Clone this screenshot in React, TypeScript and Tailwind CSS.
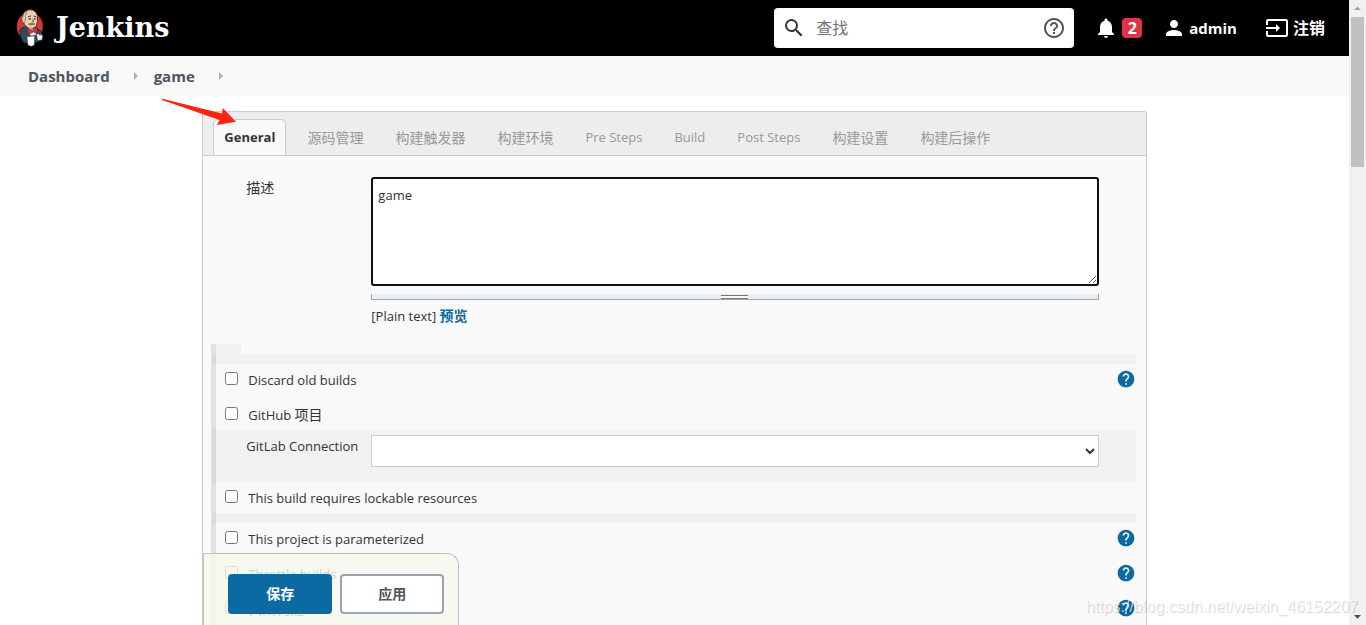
import clsx from 'clsx';
import { ReactNode } from 'react';
import {
  MdArrowDropDown,
  MdArrowDropUp,
  MdHelp,
  MdHelpOutline,
  MdInput,
  MdNotifications,
  MdPerson,
  MdSearch,
} from 'react-icons/md';

const tabs = [
  { title: 'General', latin: true },
  { title: '源码管理' },
  { title: '构建触发器' },
  { title: '构建环境' },
  { title: 'Pre Steps', latin: true },
  { title: 'Build', latin: true },
  { title: 'Post Steps', latin: true },
  { title: '构建设置' },
  { title: '构建后操作' },
];

interface OptionRowProps {
  id: string;
  label: ReactNode;
  help?: boolean;
  className?: string;
}

function OptionRow({ id, label, help, className }: OptionRowProps) {
  return (
    <div className={clsx('flex items-start pl-[9px]', className)}>
      <input
        id={id}
        type="checkbox"
        className="mt-2 size-[13px] shrink-0"
      />
      <label htmlFor={id} className="ml-2.5 mt-1.5 text-[13px] leading-5">
        {label}
      </label>
      {help && (
        <button
          type="button"
          aria-label="Help"
          className="ml-auto mt-[5px] text-[#0b6aa2]"
        >
          <MdHelp size={20} />
        </button>
      )}
    </div>
  );
}

function Divider() {
  return <div className="-ml-[3px] h-2.5 bg-black/[0.03]" />;
}

function Crumb({ children }: { children: ReactNode }) {
  return (
    <li className="flex items-center">
      <a href="#" className="leading-6">
        {children}
      </a>
      <svg viewBox="0 0 4 8" className="ml-6 mr-4 h-2 w-1 fill-[#b0b0b0]">
        <path d="M0 0l4 4-4 4z" />
      </svg>
    </li>
  );
}

function Logo() {
  return (
    <svg viewBox="0 0 28 40" className="h-10 w-7" aria-hidden="true">
      <ellipse cx="13.8" cy="18.500" rx="13" ry="14" fill="#d33833" />
      <path
        d="M5 20.500L9 19l11 1 4.500 2.500 2.300 5-1.300 4.500-6.500 3L8 35 5 30l-1.200-7z"
        fill="#2f4a5c"
        stroke="#16212b"
        strokeWidth=".8"
      />
      <path
        d="M7 8C7.300 4 10.500 1.800 14 1.800s6.500 2 7.300 5.700l.3 5.500-1.500 5.500-3.600 2-4.500-.5-3.500-3.500L6 13z"
        fill="#eecfae"
        stroke="#2e2620"
        strokeWidth=".8"
      />
      <path
        d="M7.200 7.300C8 4.500 9.500 3.300 11 3L9.700 7.500 9.600 11 8.300 15.500 6.200 13.200l-.4-3z"
        fill="#cfc8bd"
        stroke="#5f5247"
        strokeWidth=".5"
      />
      <path
        d="M12 8.800l3-.9M17.500 8l2.800.8"
        fill="none"
        stroke="#4b3a30"
        strokeWidth="1"
      />
      <path
        d="M12.800 10.900h2M18 10.900h1.700"
        fill="none"
        stroke="#1f1a17"
        strokeWidth="1.200"
      />
      <path
        d="M16.700 10.500l1.200 3-1.700.6M12.500 16.200c1.500-1.400 4.800-1.600 6.500-.2-1.700 1.200-4.500 1.500-6.500.2z"
        fill="#a77f66"
        stroke="#6b5142"
        strokeWidth=".5"
      />
      <path d="M9 18.500l5 3-2.500 6-3-3.500z" fill="#2f4a5c" />
      <path d="M13 20l4.500 1 2-.5.3 6.500-4.800.8-2.500-3z" fill="#e9eef0" />
      <path
        d="M11.800 20.500l4.200 1.600 4.800-1.600.8 5-4.300-1.500-1 .5-4 2z"
        fill="#d33833"
        stroke="#7f1b1b"
        strokeWidth=".5"
      />
      <path
        d="M20.500 26.500l2-1 1 1.500 2-.5 1.200 2-.7 3.500-4.500.5z"
        fill="#eee"
        stroke="#333"
        strokeWidth=".5"
      />
      <path
        d="M11 28.800l7.500-.8-.3 9-2.700 1.200-3.500-.9z"
        fill="#fff"
        stroke="#555"
        strokeWidth=".5"
      />
    </svg>
  );
}

function Header() {
  return (
    <header className="flex h-14 items-center bg-black pl-4 pr-6 text-base font-bold text-white">
      <a href="#" className="flex items-center gap-3">
        <Logo />
        <span className="font-['DejaVu_Serif',serif] text-[27px] leading-10">
          Jenkins
        </span>
      </a>
      <form
        role="search"
        className="ml-auto flex h-10 w-[300px] items-center rounded bg-white px-2 font-normal text-[#4d545d]"
      >
        <MdSearch size={24} className="shrink-0 text-[#333]" />
        <input
          type="text"
          placeholder="查找"
          aria-label="查找"
          className="ml-2.5 min-w-0 flex-1 outline-none placeholder:text-[#757575]"
        />
        <a href="#" aria-label="Search help">
          <MdHelpOutline size={24} />
        </a>
      </form>
      <button type="button" className="ml-5 flex items-center gap-1">
        <MdNotifications size={24} />
        <span className="size-5 rounded bg-[#dc3545] text-center leading-5">
          2
        </span>
      </button>
      <a href="#" className="ml-5 flex items-center gap-[3px] text-[15px]">
        <MdPerson size={24} />
        admin
      </a>
      <a href="#" className="ml-7 flex items-center gap-1">
        <MdInput size={24} />
        注销
      </a>
    </header>
  );
}

function BottomBar() {
  return (
    <div className="absolute bottom-0 left-0 flex h-[72px] w-64 gap-2 rounded-tr-xl border border-b-0 border-[#a8ccb8] bg-[#f6f9ee]/80 pl-6 pt-5 font-bold">
      <button
        type="submit"
        className="h-10 w-[104px] rounded bg-[#0b6aa2] text-white"
      >
        保存
      </button>
      <button
        type="button"
        className="h-10 w-[104px] rounded border-2 border-[#98a6b3] bg-white text-[#4d545d]"
      >
        应用
      </button>
    </div>
  );
}

function ConfigForm() {
  return (
    <form className="relative min-h-0 flex-1 overflow-hidden rounded-t-[3px] border border-b-0 border-[#ccc] bg-[#f9f9f9]">
      <div
        role="tablist"
        className="flex h-11 items-end gap-2.5 border-b border-[#ccc] bg-[#ededed] pl-2.5"
      >
        {tabs.map(({ title, latin }, index) => (
          <button
            key={title}
            type="button"
            role="tab"
            aria-selected={index === 0}
            className={clsx(
              'h-9 whitespace-nowrap rounded-t-[5px] border border-b-0 px-2.5',
              latin && 'text-[13px]',
              index === 0
                ? 'border-[#ccc] bg-[#f9f9f9] font-bold text-[#333]'
                : 'border-transparent text-[#999]',
            )}
          >
            {title}
          </button>
        ))}
      </div>

      <div className="flex pl-[43px] pr-[47px] pt-[21px]">
        <label htmlFor="description" className="w-[125px] shrink-0 leading-[22px]">
          描述
        </label>
        <div className="min-w-0 flex-1">
          <textarea
            id="description"
            defaultValue="game"
            className="block h-[109px] w-full resize rounded-[3px] border-2 border-[#101010] bg-white px-[5px] py-1.5 text-[13px] leading-5 outline-none"
          />
          <div className="mt-2 flex h-1.5 items-end justify-center border-x border-b border-[#9aa7b0] bg-[#e9eef2]">
            <div className="h-1 w-[27px] border-y border-[#777] bg-[#f9f9f9]" />
          </div>
          <p className="mt-1.5 text-[13px] leading-5">
            [Plain text]{' '}
            <a href="#" className="text-sm/5 font-bold text-[#0b6aa2]">
              预览
            </a>
          </p>
        </div>
      </div>

      <div className="ml-2 mr-2.5 mt-[18px] border-l-[5px] border-[#e0e0e0]">
        <div className="h-2.5 w-[25px] bg-black/[0.03]" />
        <Divider />
        <OptionRow id="discard" label="Discard old builds" help className="h-[35px]" />
        <OptionRow
          id="github"
          label={
            <>
              GitHub <span className="text-sm/5">项目</span>
            </>
          }
          className="h-[31px]"
        />
        <div className="-ml-[3px] flex h-[52px] bg-black/[0.03] pl-[33px] pr-[37px] pt-[5px]">
          <label
            htmlFor="gitlab"
            className="w-[125px] shrink-0 text-[13px] leading-[22px]"
          >
            GitLab Connection
          </label>
          <select
            id="gitlab"
            className="h-8 min-w-0 flex-1 border border-[#ccc] bg-white"
          />
        </div>
        <OptionRow
          id="lockable"
          label="This build requires lockable resources"
          className="h-[31px]"
        />
        <Divider />
        <OptionRow id="params" label="This project is parameterized" help className="h-[35px]" />
        <OptionRow id="throttle" label="Throttle builds" help className="h-[35px]" />
        <OptionRow
          id="disable"
          label={<span className="text-sm/5">关闭构建</span>}
          help
          className="h-[35px]"
        />
      </div>
      <BottomBar />
    </form>
  );
}

export default function App() {
  return (
    <div className="relative flex h-screen overflow-hidden bg-white font-['Open_Sans','Noto_Sans_CJK_SC',sans-serif] text-sm text-[#333]">
      <div className="flex min-w-0 flex-1 flex-col">
        <Header />
        <nav className="relative flex h-10 shrink-0 items-center bg-[#f8f8f8] pl-7 text-[15px] font-bold text-[#4d545d]">
          <ol className="flex h-10">
            <Crumb>Dashboard</Crumb>
            <Crumb>game</Crumb>
          </ol>
          <svg
            viewBox="0 0 76 28"
            className="absolute left-[161px] top-[42px] z-10 h-7 w-[76px] fill-[#ff2412]"
            aria-hidden="true"
          >
            <path d="M.5.500L61 15.500l.8-5.500L75 23.700 56 27l2.500-5L1 2z" />
          </svg>
        </nav>
        <main className="mx-auto mt-[15px] flex min-h-0 w-[70%] flex-1 flex-col">
          <ConfigForm />
        </main>
      </div>

      <div
        className="flex w-[17px] shrink-0 flex-col items-center bg-[#f1f1f1]"
        aria-hidden="true"
      >
        <MdArrowDropUp size={17} className="shrink-0 text-[#a3a3a3]" />
        <div className="h-[24%] w-[13px] bg-[#c1c1c1]" />
        <MdArrowDropDown size={17} className="mt-auto shrink-0 text-[#505050]" />
      </div>

      <span className="pointer-events-none absolute bottom-2 right-2 font-['Liberation_Sans',sans-serif] text-base leading-5 text-white/70 [text-shadow:1px_1px_1px_rgb(0_0_0/0.18)]">
        https://blog.csdn.net/weixin_46152207
      </span>
    </div>
  );
}
